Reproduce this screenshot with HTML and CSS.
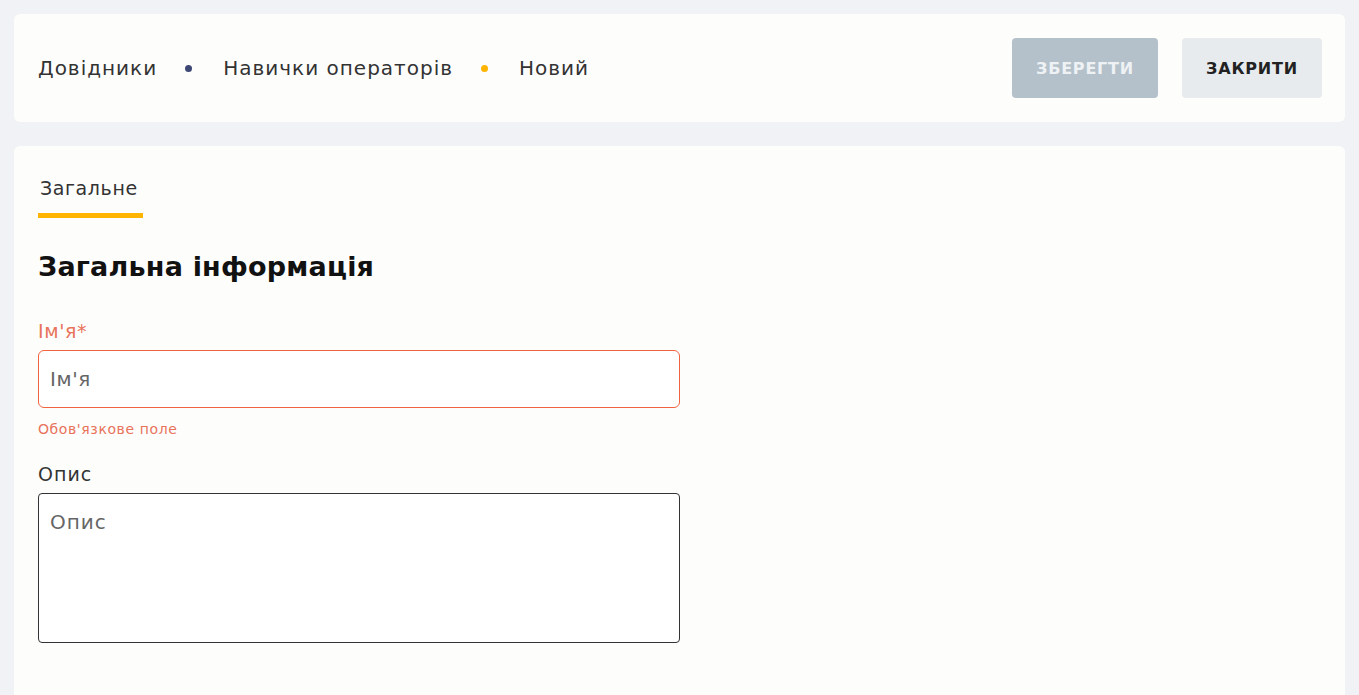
FILE: index.html
```html
<!DOCTYPE html>
<html lang="uk">
<head>
<meta charset="utf-8">
<title>Навички операторів — Новий</title>
<link rel="stylesheet" href="styles.css">
</head>
<body>
<div class="page">
  <header class="topbar">
    <nav class="crumbs">
      <span class="crumb">Довідники</span>
      <span class="dot dot-blue"></span>
      <span class="crumb">Навички операторів</span>
      <span class="dot dot-orange"></span>
      <span class="crumb">Новий</span>
    </nav>
    <div class="actions">
      <button class="btn btn-save" disabled>ЗБЕРЕГТИ</button>
      <button class="btn btn-close">ЗАКРИТИ</button>
    </div>
  </header>
  <main class="card">
    <div class="tabs">
      <div class="tab active">Загальне</div>
    </div>
    <h1 class="title">Загальна інформація</h1>
    <div class="field">
      <label class="label label-error">Ім'я*</label>
      <input class="input input-error" type="text" placeholder="Ім'я">
      <div class="error">Обов'язкове поле</div>
    </div>
    <div class="field field-desc">
      <label class="label">Опис</label>
      <textarea class="textarea" placeholder="Опис"></textarea>
    </div>
  </main>
</div>
</body>
</html>
```
FILE: styles.css
```css
* { box-sizing: border-box; }
html, body { margin: 0; padding: 0; }
body {
  background: #f0f2f5;
  font-family: "DejaVu Sans", "Noto Sans", sans-serif;
  color: #333;
  height: 695px;
  overflow: hidden;
}
.page {
  padding: 14px;
  display: flex;
  flex-direction: column;
  gap: 24px;
}
.topbar {
  background: #fdfdfc;
  border-radius: 6px;
  height: 108px;
  padding: 0 23px 0 24px;
  display: flex;
  align-items: center;
  justify-content: space-between;
}
.crumbs {
  display: flex;
  align-items: center;
  font-size: 20px;
  color: #333;
}
.crumb { letter-spacing: 1px; }
.dot {
  width: 7px;
  height: 7px;
  border-radius: 50%;
  margin: 0 31px 0 28px;
}
.dot-blue { background: #3c4873; }
.dot-orange { background: #ffb400; }
.actions {
  display: flex;
  gap: 24px;
}
.btn {
  height: 60px;
  border: none;
  border-radius: 4px;
  font-family: inherit;
  font-weight: bold;
  font-size: 16px;
  letter-spacing: 0.8px;
}
.btn-save {
  width: 146px;
  background: #b5c1ca;
  color: #eef2f5;
}
.btn-close {
  width: 140px;
  background: #e7ebee;
  color: #222;
}
.card {
  background: #fdfdfc;
  border-radius: 6px;
  height: 560px;
  padding: 31px 24px 24px;
}
.tabs { display: flex; }
.tab {
  font-size: 19px;
  letter-spacing: 0.6px;
  color: #333;
  padding: 0 2px 14px;
  border-bottom: 5px solid #ffb400;
  width: 105px;
}
.title {
  margin: 33px 0 0;
  font-size: 27px;
  letter-spacing: 0.2px;
  font-weight: bold;
  color: #111;
}
.field {
  margin-top: 38px;
  width: 642px;
  display: flex;
  flex-direction: column;
}
.label {
  font-size: 19px;
  letter-spacing: 0.6px;
  color: #333;
  margin-bottom: 8px;
}
.label-error { color: #e8735a; }
.input {
  height: 58px;
  border: 1px solid #ef6340;
  border-radius: 6px;
  background: #fff;
  padding: 0 11px;
  font-family: inherit;
  font-size: 20px;
  letter-spacing: 0.6px;
  color: #333;
  outline: none;
}
.input::placeholder, .textarea::placeholder { color: #666; }
.error {
  margin-top: 13px;
  font-size: 14px;
  letter-spacing: 0.6px;
  color: #e8735a;
}
.field-desc { margin-top: 26px; }
.field-desc .label { letter-spacing: 1px; margin-bottom: 8px; }
.textarea {
  height: 150px;
  border: 1px solid #333;
  border-radius: 4px;
  background: #fff;
  padding: 16px 11px;
  font-family: inherit;
  font-size: 20px;
  letter-spacing: 1px;
  resize: none;
  outline: none;
}
```
